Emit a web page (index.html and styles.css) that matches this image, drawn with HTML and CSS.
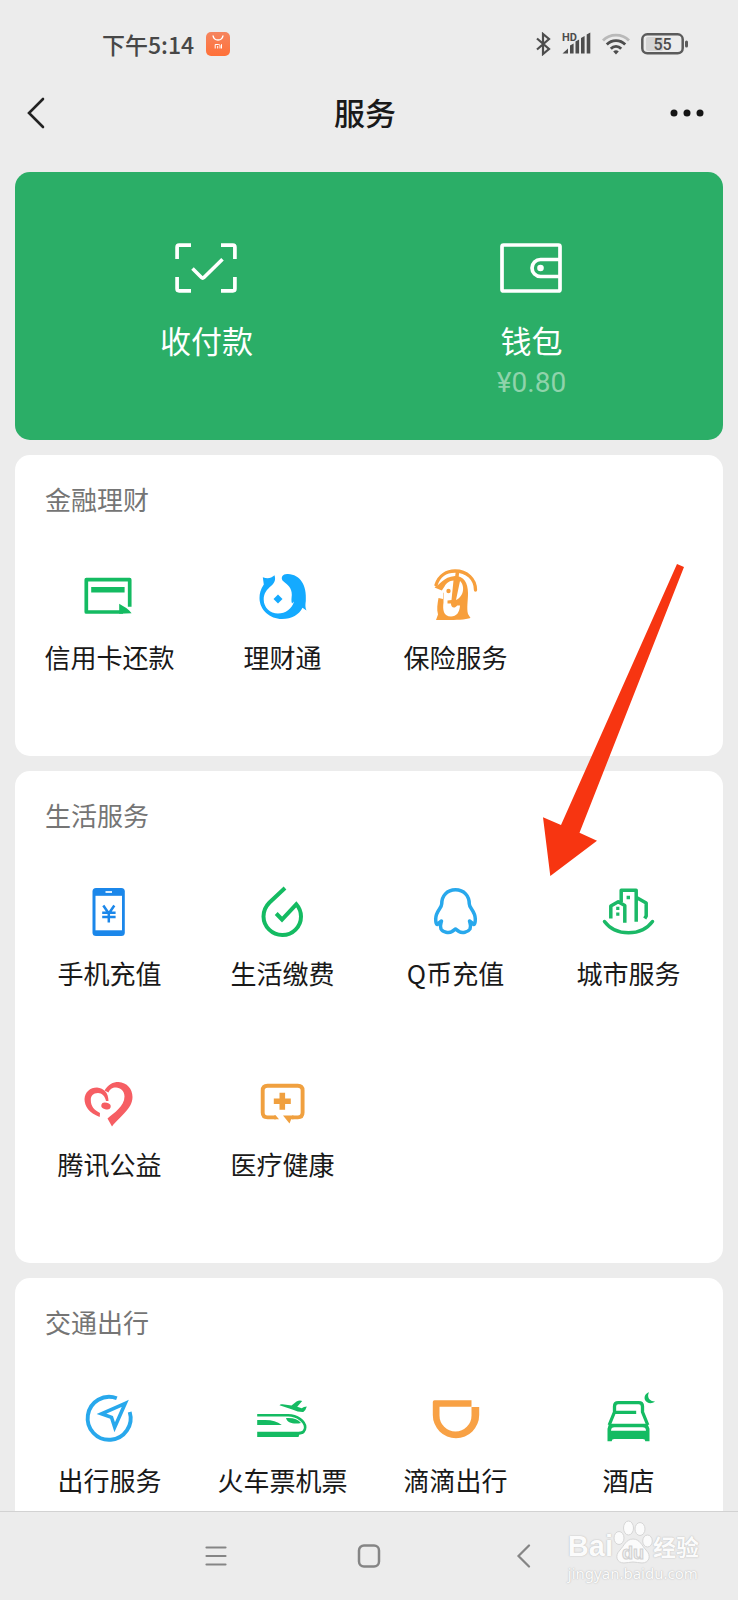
FILE: index.html
```html
<!DOCTYPE html>
<html lang="zh-CN">
<head>
<meta charset="utf-8">
<meta name="viewport" content="width=device-width, initial-scale=1">
<title>服务</title>
<link rel="stylesheet" href="styles.css">
</head>
<body>
<div class="status">
  <span class="clock">下午5:14</span>
  <svg class="mi-app" width="24" height="24" viewBox="0 0 24 24">
    <defs><linearGradient id="mi" x1="0" y1="0" x2="0" y2="1"><stop offset="0" stop-color="#f5855f"/><stop offset="1" stop-color="#ff7038"/></linearGradient></defs>
    <rect width="24" height="24" rx="5" fill="url(#mi)"/>
    <g fill="none" stroke="#fff"><path d="M7 3.500c1 6 9 6 10 0" stroke-width="1.500"/><path d="M9.200 16.500v-4h3.500q1.300 0 1.300 1.300v2.700M11.700 14v2.500M15.500 12.200v4.300" stroke-width="1"/></g>
  </svg>
  <div class="indicators">
    <svg width="15" height="24" viewBox="0 0 15 24" fill="none" stroke="#4d4d4d" stroke-width="2.200"><path d="M1 6.500l12 10.500-6 5V2l6 5L1 17.500"/></svg>
    <svg width="29" height="24" viewBox="0 0 29 24" fill="#4d4d4d"><text class="hd" x="0" y="9">HD</text><path d="M.5 21.500l5.500-5v5zM8 13.500l3.600-2v10H8zM13.500 9.500l3.600-2v14h-3.600zM19 6l3.600-2v17.500H19zM24.700 2.500l3.600-2v21h-3.600z"/></svg>
    <svg width="28" height="24" viewBox="0 0 28 24" fill="none" stroke="#4d4d4d" stroke-width="2.800"><path d="M1 8.500c7-7.300 19-7.300 26 0" stroke="#b9b9b9"/><path d="M4.800 12.500c5-5.300 13.400-5.300 18.400 0M8.800 16.800c3-3.200 7.400-3.200 10.400 0"/><path d="M11.200 19.500q2.800-2.500 5.600 0L14 22.500z" fill="#4d4d4d" stroke="none"/></svg>
    <svg width="47" height="22" viewBox="0 0 47 22"><rect x="5" y="4" width="17" height="14" rx="2" fill="#d5d5d5"/><rect x="1.300" y="1.300" width="40.400" height="19" rx="5" fill="none" stroke="#5b5b5b" stroke-width="2.500"/><rect x="44" y="7.500" width="3" height="7" rx="1.500" fill="#5b5b5b"/><text class="charge" x="21.500" y="16.500" text-anchor="middle">55</text></svg>
  </div>
</div>
<header class="bar">
  <button class="back" aria-label="返回"><svg width="20" height="34" viewBox="0 0 20 34" fill="none" stroke="#222" stroke-width="2.600" stroke-linecap="round"><path d="M17 3L3 17l14 14"/></svg></button>
  <h1 class="bar-title">服务</h1>
  <button class="more" aria-label="更多"><svg width="34" height="8" viewBox="0 0 34 8" fill="#151515"><circle cx="4" cy="4" r="3.500"/><circle cx="17" cy="4" r="3.500"/><circle cx="30" cy="4" r="3.500"/></svg></button>
</header>
<main class="content">
  <div class="stack">
  <section class="pay">
    <a class="pay-item" href="#">
      <svg width="64" height="56" viewBox="1 0 64 56" fill="none" stroke="#fff" stroke-width="3.700"><path d="M3.100 19V7.200q0-2 2-2H17M47 5.200h11.900q2 0 2 2V19M60.900 37v11.800q0 2-2 2H47M17 50.800H5.100q-2 0-2-2V37"/><path d="M18.500 28.500l9 9q1.200 1.200 2.400 0L48.500 19.300" stroke-width="3.600"/></svg>
      <span class="pay-label">收付款</span>
    </a>
    <a class="pay-item" href="#">
      <svg width="64" height="56" viewBox="1 0 64 56" fill="none" stroke="#fff" stroke-width="3.700"><rect x="3" y="5" width="58" height="46" rx="1.500"/><path d="M60 19.500H41.500a8.500 8.500 0 0 0 0 17H60"/><circle cx="41.500" cy="28" r="3.300" fill="#fff" stroke="none"/></svg>
      <span class="pay-label">钱包</span>
      <span class="pay-amount">¥0.80</span>
    </a>
  </section>

  <section class="card">
    <h2 class="card-title">金融理财</h2>
    <div class="grid">
      <a class="item" href="#">
        <svg class="icon" viewBox="1 0 56 56"><path d="M42 44H5.300V11.700h43.400v27" fill="none" stroke="#14bb62" stroke-width="3.700" stroke-linejoin="round"/><path d="M10.200 19h33.400v5.400H10.200zM38.200 35.700c5 3 9.800 5.300 12.400 9.500l-12.400.5z" fill="#14bb62"/></svg>
        <span>信用卡还款</span>
      </a>
      <a class="item" href="#">
        <svg class="icon" viewBox="1 0 56 56" fill="#14aaff"><path d="M20.500 7.200C17 10.500 13.500 10.800 8.800 9.300L9.800 16.500C6.500 21 5.500 26 5.500 30 5.500 42 16 51 28 51c10 0 17-4.500 20.500-11.300l4 2.800c-1-2.500-1.400-4.500-.7-9.500C53 17 46 6.500 34 6c-5-.5-7.500 3-5.500 6.500C34 17 38 20 37.800 27c-.2 3-.8 6 .2 8.500l2-2C38 41 31.500 45.500 24 45.500c-8 0-14.300-6-14.300-14C9.700 25 13 21.500 17 18c3.500-3 5-6 3.500-10.800z"/><path d="M24 26.500l4.500 4.500-4.500 4.500-4.500-4.500z"/></svg>
        <span>理财通</span>
      </a>
      <a class="item" href="#">
        <svg class="icon" viewBox="1 0 56 56"><path d="M7.500 19.500C13 17 16 9 28 8c9 0 13 7 13 17 0 8-1.500 15 0 21l2.500 4c-7 2.500-23 2-34.500 2l2-5.500c-1.500-5-.5-11 .5-16.500l4.500 1V23z" fill="#f79f3c"/><path d="M17.500 18.500c2-4 5-5.500 9-6L24.500 32l-4 .500v3h3.500c0 5 4 5 6.300 2H33c-.5 7-3.500 11-9 11-7.500 0-8.500-7-7.500-14V25l-2-2zM33 13c4.500 3.500 5 15-4 19z" fill="#fff"/><g fill="none" stroke="#f79f3c" stroke-width="3.300"><path d="M9 17C12 7 20 3 28 3c12 0 20.500 8 20.500 19" stroke-linecap="round"/><path d="M30.500 4l-4.500 33" stroke-width="3.500"/></g><circle cx="21.500" cy="23" r="2.200" fill="#f79f3c"/></svg>
        <span>保险服务</span>
      </a>
    </div>
  </section>

  <section class="card">
    <h2 class="card-title">生活服务</h2>
    <div class="grid">
      <a class="item" href="#">
        <svg class="icon" viewBox="1 0 56 56"><rect x="11.500" y="4" width="32.300" height="48" rx="3.500" fill="#1b87ea"/><path d="M14.500 11.800h26.500v34.500h-26.500z" fill="#fff"/><path d="M24.500 8H31" stroke="#fff" stroke-width="1.700"/><path d="M22.300 21.500l5.500 8 5.500-8M27.800 29v9.500M21.200 28.800h13.400M21.200 33h13.400" fill="none" stroke="#1b87ea" stroke-width="2.500"/></svg>
        <span>手机充值</span>
      </a>
      <a class="item" href="#">
        <svg class="icon" viewBox="1 0 56 56" fill="none" stroke="#14bb62" stroke-width="4"><path d="M31 4L15.500 18.500c-4 4-6 8.500-6 14A18.800 18.800 0 0 0 28.500 51 18.500 18.500 0 0 0 47 32.500c0-5-1.500-8.500-4.700-12.200L28 35.500l-5.800-6"/></svg>
        <span>生活缴费</span>
      </a>
      <a class="item" href="#">
        <svg class="icon" viewBox="1 0 56 56" fill="none" stroke="#28a8ec" stroke-width="3.500" stroke-linejoin="round"><path d="M28.500 5.800C20 5.800 14.700 12 14.700 20c0 4-6 7-6 15 0 3 .3 5.500 1.300 5.500l4.500-3.500c-.5 3-2 4.500-.5 8 2 3.500 8 4.500 11 2.500l3.500-2.500 3.500 2.500c3 2 9 1 11-2.500 1.500-3.500 0-5-.5-8l4.500 3.500c1 0 1.300-2.500 1.300-5.500 0-8-6-11-6-15 0-8-5.300-14.200-13.800-14.200z"/></svg>
        <span>Q币充值</span>
      </a>
      <a class="item" href="#">
        <svg class="icon" viewBox="1 0 56 56" fill="none" stroke="#1bb967" stroke-width="3.500" stroke-linejoin="round"><path d="M4.500 37.500c11 15 37 15 48 0" stroke-linecap="round"/><path d="M10.800 34.500V22l7.400-4.300 6.600 3.800v17.300M21.200 18V6.200h15v31.500M36.500 13.500l9.700 5.500v13l-1.500 2.500"/><path d="M16.200 22.800h3.200V26h-3.200zM16.200 28.500h3.200v3.200h-3.200zM26.600 11.800h3.400V15.200h-3.400z" fill="#1bb967" stroke="none"/></svg>
        <span>城市服务</span>
      </a>
      <a class="item" href="#">
        <svg class="icon" viewBox="1 0 56 56" fill="#f65e63"><path d="M18.700 42C8 38 3.500 31 3.500 24c.5-7 5.500-11.500 12.500-11.500 7 .5 11.500 5.500 11.500 13.500H25c-1-5-4-8-8-8-5 0-7.200 3-7.200 7 0 6 3.200 10 9.200 13z"/><path d="M23.500 15.500C27 9.500 32 7 37.500 7c8.500.5 14 7 14 15 0 12-12.500 19-20.500 29.500l-4.500-8C33 38 43.500 31 43.500 21.500c0-5.500-4-9-8.500-9-4 0-6 1.500-7.500 5z"/><ellipse cx="25" cy="31" rx="4.800" ry="3.300" transform="rotate(15 25 31)"/></svg>
        <span>腾讯公益</span>
      </a>
      <a class="item" href="#">
        <svg class="icon" viewBox="1 0 56 56"><path d="M22 42.400H13.500q-4.800 0-4.800-4.800V15.500q0-4.800 4.800-4.800h30.300q4.800 0 4.800 4.800v22.100q0 4.800-4.800 4.800H38" fill="none" stroke="#f0a03f" stroke-width="3.900"/><path d="M25.500 17.800h5.600V23.500h5.700v5.600h-5.700v5.700h-5.600v-5.700h-5.700v-5.600h5.700zM29 40.500h10.500v3.800h-2.300l-1.700 4.200zM20 40.500h1.800l3.200 3.800h-5z" fill="#f0a03f"/></svg>
        <span>医疗健康</span>
      </a>
    </div>
  </section>

  <section class="card">
    <h2 class="card-title">交通出行</h2>
    <div class="grid">
      <a class="item" href="#">
        <svg class="icon" viewBox="1 -1 56 56" fill="none" stroke="#28a8ec" stroke-width="3.900"><path d="M35.800 6.200A21.500 21.500 0 1 0 48.700 20"/><path d="M44.300 11.300L20.500 21.800l10 3.500 3.200 10z" stroke-width="3.600"/></svg>
        <span>出行服务</span>
      </a>
      <a class="item" href="#">
        <svg class="icon" viewBox="1 -1 56 56" fill="#14bb62"><path d="M3.200 39.700H44.800q3 0 5-1.500l-.5 3.500q-2 .8-4 .8L44.500 45H3.200zM3.200 28h8c7 0 12 1.500 16.600 4.900H3.200zM32 26c7-.5 12 1 15 5-7 1.500-14 0-15-5z"/><path d="M3.200 23.300h31c9 0 17 6.200 17 12 0 3.500-2 6-7 6" fill="none" stroke="#14bb62" stroke-width="2.600"/><path d="M25.500 13.300q1-1.600 3-1l9 1.200 5-4q3-1.500 5.700-.5l-5 5.800 4.500 1.500q2-1.500 5.100-1.800-1 3.800-3.500 5.500-5 .2-11-2.500z"/></svg>
        <span>火车票机票</span>
      </a>
      <a class="item" href="#">
        <svg class="icon" viewBox="1 -1 56 56" fill="#f8a145"><path d="M5.800 10q0-1.700 1.700-1.700h37v6.400h-32v8.800a16 16 0 0 0 32 0V15h7.700v8a23.200 23.200 0 0 1-46.400 0z"/></svg>
        <span>滴滴出行</span>
      </a>
      <a class="item" href="#">
        <svg class="icon" viewBox="1 -1 56 56" fill="#14bb62"><path d="M49 .3c-2.500 5 .5 9.200 6 9.200-3.500 3-8.500 1.700-10-1.500C43.800 4.500 45.500 1.500 49 .3z"/><path d="M14.500 20v-5.500q0-3.800 3.800-3.800h20.400q3.800 0 3.800 3.800V20l5.300 13M14.500 20L9.200 33M15 20.300h21.200" fill="none" stroke="#14bb62" stroke-width="3.300"/><path d="M9 31.800h38.500l2 5V49.300h-4.200q0-2.300-2.500-2.300H14.200q-2.500 0-2.500 2.300H7.500V36.800z"/><path d="M11 38.700q0-3.400 3.500-3.400h28q3.500 0 3.500 3.400z" fill="#fff"/></svg>
        <span>酒店</span>
      </a>
    </div>
  </section>

  <svg class="arrow" width="142" height="312" viewBox="0 0 142 312" fill="#f73511"><path d="M135 0l7 3L37.500 268.700l17.500 8L8.300 312 1 253.300l18 7.700z"/></svg>
  </div>
</main>
<nav class="nav">
  <button aria-label="菜单"><svg width="24" height="24" viewBox="0 0 24 24" stroke="#858585" stroke-width="2.200" stroke-linecap="round"><path d="M2.500 3.500h19M2.500 12h19M2.500 20.500h19"/></svg></button>
  <button aria-label="主页"><svg width="24" height="24" viewBox="0 0 24 24" fill="none" stroke="#858585" stroke-width="2.500"><rect x="2" y="1.500" width="20" height="21" rx="5"/></svg></button>
  <button aria-label="返回"><svg width="24" height="24" viewBox="0 0 24 24" fill="none" stroke="#858585" stroke-width="2.200" stroke-linecap="round"><path d="M19 1.500L8.500 12 19 22.500"/></svg></button>
  <div class="watermark">
    <div class="brand">
      <span class="brand-bai">Bai</span>
      <svg width="40" height="44" viewBox="0 0 40 44" fill="#fbfbfb" stroke="#d6d6d6"><ellipse cx="6" cy="18" rx="5" ry="6.500"/><ellipse cx="15.500" cy="8" rx="5" ry="7"/><ellipse cx="27" cy="9" rx="5" ry="6.500"/><ellipse cx="34.500" cy="21" rx="4.800" ry="6"/><path d="M20 19c7 0 9 7 13 11 6 6 3 13-4 13-3 0-6-1-9-1s-6 1-9 1c-7 0-10-7-4-13 4-4 6-11 13-11z"/><text class="brand-du" x="20" y="39" text-anchor="middle">du</text></svg>
      <span class="brand-cn">经验</span>
    </div>
    <div class="brand-url">jingyan.baidu.com</div>
  </div>
</nav>
</body>
</html>
```
FILE: styles.css
```css
* { box-sizing: border-box; }

body {
  margin: 0;
  height: 100vh;
  display: flex;
  flex-direction: column;
  background: #ececec;
  color: #191919;
  font-family: "Noto Sans CJK SC", sans-serif;
}

h1, h2 { margin: 0; }
a { color: inherit; text-decoration: none; }
svg { display: block; flex: none; }
button {
  display: flex;
  padding: 0;
  border: 0;
  background: none;
}

.status {
  flex: none;
  display: flex;
  align-items: center;
  height: 76px;
  padding: 12px 50px 0 102px;
}
.clock {
  font-size: 23px;
  font-weight: 500;
  line-height: 32px;
  color: #474747;
}
.mi-app { margin-left: 12px; }
.indicators {
  display: flex;
  align-items: center;
  gap: 11px;
  margin-left: auto;
}
.hd { font: 700 11px Roboto, sans-serif; }
.charge { font: 500 16px Roboto, sans-serif; fill: #4d4d4d; }

.bar {
  flex: none;
  display: grid;
  grid-template-columns: 1fr auto 1fr;
  align-items: center;
  height: 74px;
  padding: 0 34px 0 26px;
}
.bar-title {
  padding-bottom: 2px;
  font-size: 31px;
  font-weight: 500;
  line-height: 40px;
}
.more { justify-self: end; }

.content {
  flex: 1;
  min-height: 0;
  overflow-y: auto;
  scrollbar-width: none;
}
.stack {
  position: relative;
  display: flex;
  flex-direction: column;
  gap: 15px;
  padding: 22px 15px 15px;
}

.pay {
  display: grid;
  grid-template-columns: 1fr 1fr;
  padding: 68px 29px 36px;
  border-radius: 15px;
  background: #2bae67;
  color: #fff;
}
.pay-item {
  display: flex;
  flex-direction: column;
  align-items: center;
}
.pay-label {
  margin-top: 24px;
  font-size: 31px;
  line-height: 40px;
}
.pay-amount {
  margin-top: 2px;
  font-family: Roboto, sans-serif;
  font-size: 28px;
  line-height: 42px;
  color: #8fd3ab;
}

.card {
  padding-bottom: 46px;
  border-radius: 15px;
  background: #fff;
}
.card-title {
  padding: 26px 30px 2px;
  font-size: 26px;
  font-weight: 400;
  line-height: 36px;
  color: #757575;
}
.grid {
  display: grid;
  grid-template-columns: repeat(4, 1fr);
  padding: 0 8px;
}
.item {
  display: flex;
  flex-direction: column;
  align-items: center;
  gap: 15px;
  padding: 49px 0 35px;
  font-size: 26px;
  line-height: 36px;
  white-space: nowrap;
}
.icon { width: 56px; height: 56px; }

.arrow {
  position: absolute;
  top: 414px;
  right: 54px;
  pointer-events: none;
}

.nav {
  flex: none;
  position: relative;
  display: grid;
  grid-template-columns: repeat(3, 153px);
  justify-content: center;
  justify-items: center;
  align-items: center;
  height: 89px;
  border-top: 1px solid #d2d2d2;
}
.watermark {
  position: absolute;
  top: 8px;
  right: 39px;
  color: #fbfbfb;
  text-shadow: 0 0 1px #bbb, 0 0 2px #ccc;
}
.brand { display: flex; align-items: flex-end; }
.brand-bai {
  font: 700 29px/36px "Liberation Sans", sans-serif;
}
.brand-cn {
  font-size: 23px;
  font-weight: 700;
  line-height: 36px;
}
.brand-du {
  font: 700 18px "Liberation Sans", sans-serif;
  fill: #f0f0f0;
  stroke: #d0d0d0;
  text-shadow: none;
}
.brand-url {
  font: 15px/18px "Noto Sans", sans-serif;
}
```
